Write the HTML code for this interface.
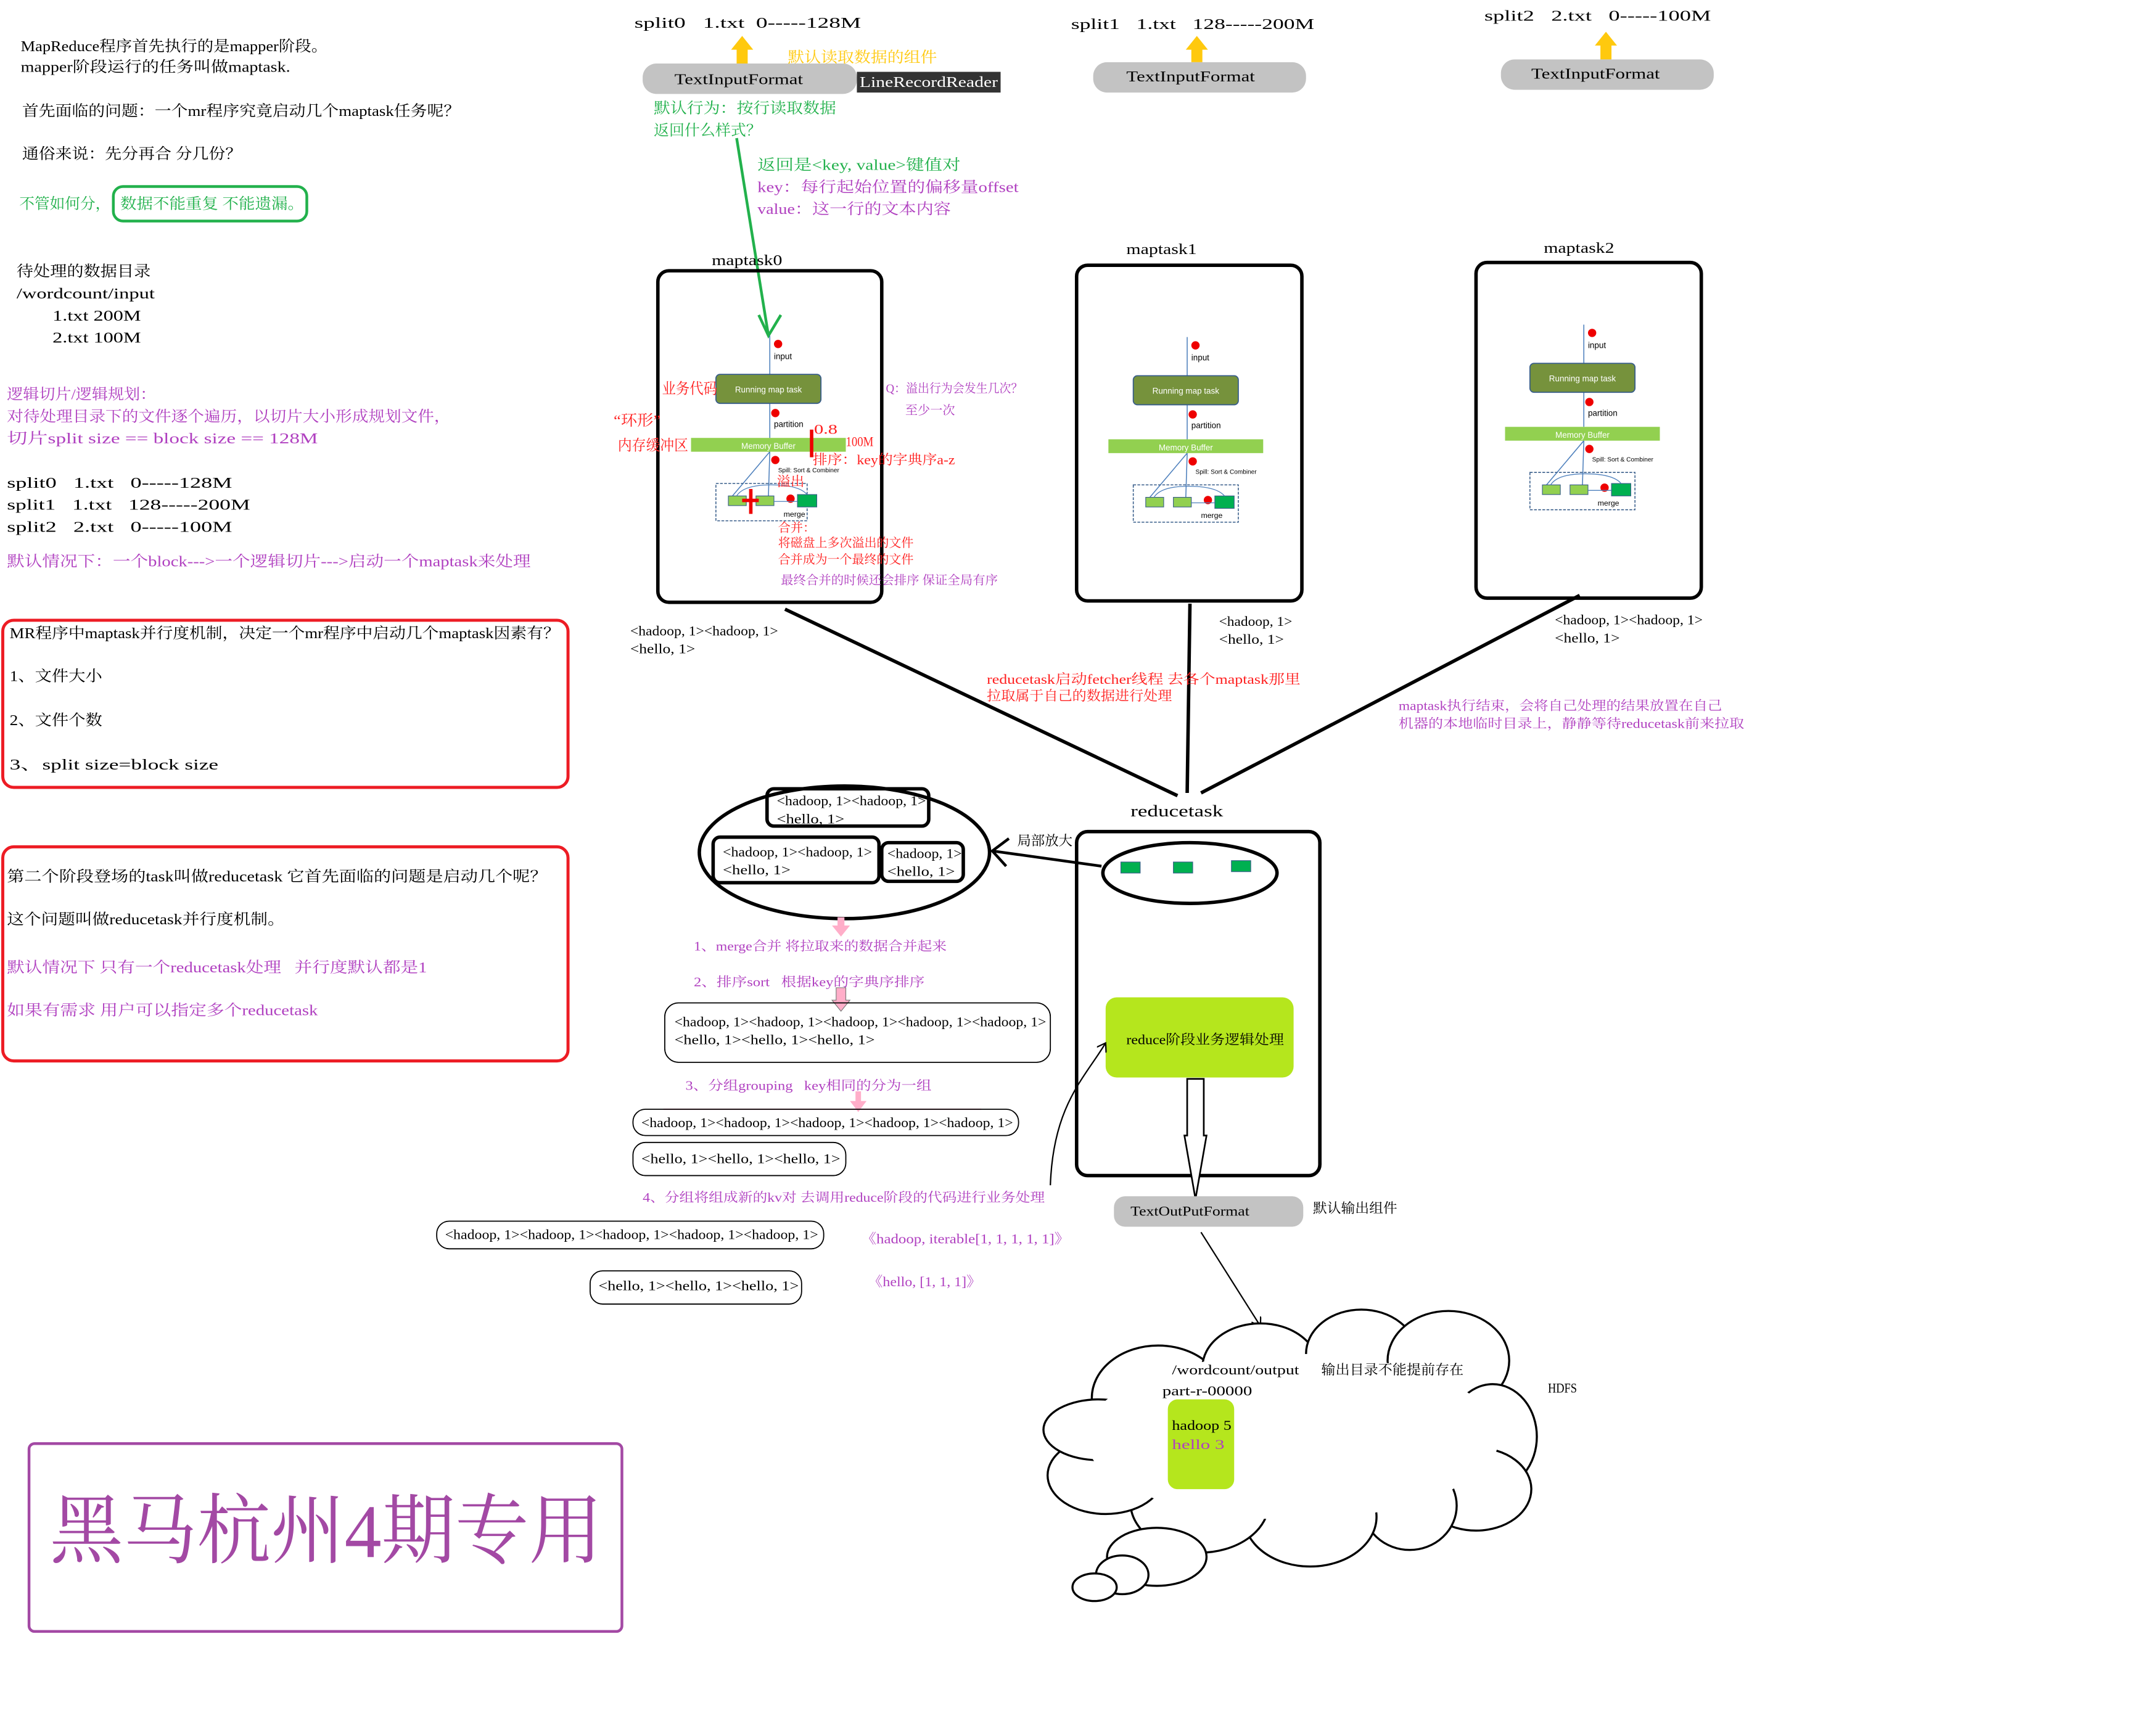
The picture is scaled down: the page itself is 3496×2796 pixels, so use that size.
<!DOCTYPE html>
<html><head><meta charset="utf-8"><style>
html,body{margin:0;padding:0;background:#fff;}
svg{display:block;}
text{font-family:"Liberation Serif","Noto Serif CJK SC",serif;font-size:11px;fill:#000;white-space:pre;}
.p{fill:#b040c0;} .g{fill:#22b14c;} .r{fill:#ff2020;} .y{fill:#ffc90e;}
.s{font-family:"Liberation Sans","Noto Sans CJK SC",sans-serif;}
</style></head><body>
<svg width="3496" height="2796" viewBox="0 0 1560 1248" preserveAspectRatio="none" xmlns="http://www.w3.org/2000/svg" xml:space="preserve">
<defs>
<marker id="ah" markerWidth="8" markerHeight="8" refX="6" refY="4" orient="auto"><path d="M0,0 L6,4 L0,8" fill="none" stroke="#000" stroke-width="1"/></marker>
</defs>
<rect width="1560" height="1248" fill="#fff"/>

<!-- left texts -->
<text x="15" y="37" textLength="222" lengthAdjust="spacingAndGlyphs">MapReduce程序首先执行的是mapper阶段。</text>
<text x="15" y="52" textLength="195" lengthAdjust="spacingAndGlyphs">mapper阶段运行的任务叫做maptask.</text>
<text x="16" y="84" textLength="317" lengthAdjust="spacingAndGlyphs">首先面临的问题：一个mr程序究竟启动几个maptask任务呢？</text>
<text x="16" y="115" textLength="159" lengthAdjust="spacingAndGlyphs">通俗来说：先分再合 分几份？</text>
<text x="14" y="151" class="g" textLength="66" lengthAdjust="spacingAndGlyphs">不管如何分，</text>
<rect x="82" y="135" width="140" height="25" rx="7" fill="none" stroke="#22b14c" stroke-width="2"/>
<text x="87" y="151" class="g" textLength="133" lengthAdjust="spacingAndGlyphs">数据不能重复 不能遗漏。</text>
<text x="12" y="200" textLength="97" lengthAdjust="spacingAndGlyphs">待处理的数据目录</text>
<text x="12" y="216" textLength="100" lengthAdjust="spacingAndGlyphs">/wordcount/input</text>
<text x="38" y="232" textLength="64" lengthAdjust="spacingAndGlyphs">1.txt 200M</text>
<text x="38" y="248" textLength="64" lengthAdjust="spacingAndGlyphs">2.txt 100M</text>
<text x="5" y="289" class="p" textLength="108" lengthAdjust="spacingAndGlyphs">逻辑切片/逻辑规划：</text>
<text x="5" y="305" class="p" textLength="321" lengthAdjust="spacingAndGlyphs">对待处理目录下的文件逐个遍历，以切片大小形成规划文件，</text>
<text x="5" y="321" class="p" textLength="225" lengthAdjust="spacingAndGlyphs">切片split size == block size == 128M</text>
<text x="5" y="353" textLength="163" lengthAdjust="spacingAndGlyphs">split0   1.txt   0-----128M</text>
<text x="5" y="369" textLength="176" lengthAdjust="spacingAndGlyphs">split1   1.txt   128-----200M</text>
<text x="5" y="385" textLength="163" lengthAdjust="spacingAndGlyphs">split2   2.txt   0-----100M</text>
<text x="5" y="410" class="p" textLength="379" lengthAdjust="spacingAndGlyphs">默认情况下：一个block---&gt;一个逻辑切片---&gt;启动一个maptask来处理</text>

<rect x="2" y="449" width="409" height="121" rx="8" fill="none" stroke="#ed1c24" stroke-width="2.2"/>
<text x="7" y="462" textLength="398" lengthAdjust="spacingAndGlyphs">MR程序中maptask并行度机制，决定一个mr程序中启动几个maptask因素有？</text>
<text x="7" y="493" textLength="67" lengthAdjust="spacingAndGlyphs">1、文件大小</text>
<text x="7" y="525" textLength="67" lengthAdjust="spacingAndGlyphs">2、文件个数</text>
<text x="7" y="557" textLength="151" lengthAdjust="spacingAndGlyphs">3、split size=block size</text>

<rect x="2" y="613" width="409" height="155" rx="8" fill="none" stroke="#ed1c24" stroke-width="2.2"/>
<text x="5" y="638" textLength="391" lengthAdjust="spacingAndGlyphs">第二个阶段登场的task叫做reducetask 它首先面临的问题是启动几个呢？</text>
<text x="5" y="669" textLength="201" lengthAdjust="spacingAndGlyphs">这个问题叫做reducetask并行度机制。</text>
<text x="5" y="704" class="p" textLength="304" lengthAdjust="spacingAndGlyphs">默认情况下 只有一个reducetask处理   并行度默认都是1</text>
<text x="5" y="735" class="p" textLength="225" lengthAdjust="spacingAndGlyphs">如果有需求 用户可以指定多个reducetask</text>

<rect x="21" y="1045" width="429" height="136" rx="4" fill="none" stroke="#a349a4" stroke-width="2"/>
<text x="36" y="1127" style="font-size:55px;fill:#a349a4" textLength="400" lengthAdjust="spacingAndGlyphs">黑马杭州4期专用</text>

<!-- top splits -->
<text x="459" y="20" textLength="164" lengthAdjust="spacingAndGlyphs">split0   1.txt  0-----128M</text>
<path d="M533,46 V36 H529 L537,26 L545,36 H541 V46Z" fill="#ffc90e"/>
<rect x="465" y="46" width="155" height="22" rx="10" fill="#c3c3c3"/>
<text x="488" y="61" textLength="93" lengthAdjust="spacingAndGlyphs">TextInputFormat</text>
<rect x="620" y="52" width="104" height="15" fill="#333"/>
<text x="622" y="63" style="fill:#fff" textLength="100" lengthAdjust="spacingAndGlyphs">LineRecordReader</text>
<text x="570" y="45" class="y" textLength="108" lengthAdjust="spacingAndGlyphs">默认读取数据的组件</text>
<text x="473" y="82" class="g" textLength="132" lengthAdjust="spacingAndGlyphs">默认行为：按行读取数据</text>
<text x="473" y="98" class="g" textLength="78" lengthAdjust="spacingAndGlyphs">返回什么样式？</text>
<path d="M533,100 L556,243 M549,228 L556,243 L565,228" fill="none" stroke="#22b14c" stroke-width="2"/>
<text x="548" y="123" class="g" textLength="147" lengthAdjust="spacingAndGlyphs">返回是&lt;key, value&gt;键值对</text>
<text x="548" y="139" class="p" textLength="189" lengthAdjust="spacingAndGlyphs">key：每行起始位置的偏移量offset</text>
<text x="548" y="155" class="p" textLength="140" lengthAdjust="spacingAndGlyphs">value：这一行的文本内容</text>

<text x="775" y="21" textLength="176" lengthAdjust="spacingAndGlyphs">split1   1.txt   128-----200M</text>
<path d="M862,45 V36 H858 L866,26 L874,36 H870 V45Z" fill="#ffc90e"/>
<rect x="791" y="45" width="154" height="22" rx="10" fill="#c3c3c3"/>
<text x="815" y="59" textLength="93" lengthAdjust="spacingAndGlyphs">TextInputFormat</text>

<text x="1074" y="15" textLength="164" lengthAdjust="spacingAndGlyphs">split2   2.txt   0-----100M</text>
<path d="M1158,43 V33 H1154 L1162,23 L1170,33 H1166 V43Z" fill="#ffc90e"/>
<rect x="1086" y="43" width="154" height="22" rx="10" fill="#c3c3c3"/>
<text x="1108" y="57" textLength="93" lengthAdjust="spacingAndGlyphs">TextInputFormat</text>

<!-- maptask boxes -->
<text x="515" y="192" textLength="51" lengthAdjust="spacingAndGlyphs">maptask0</text>
<rect x="476" y="196" width="162" height="240" rx="8" fill="none" stroke="#000" stroke-width="2.5"/>
<text x="815" y="184" textLength="51" lengthAdjust="spacingAndGlyphs">maptask1</text>
<rect x="779" y="192" width="163" height="243" rx="8" fill="none" stroke="#000" stroke-width="2.5"/>
<text x="1117" y="183" textLength="51" lengthAdjust="spacingAndGlyphs">maptask2</text>
<rect x="1068" y="190" width="163" height="243" rx="8" fill="none" stroke="#000" stroke-width="2.5"/>

<!-- internals maptask0 -->
<g transform="translate(518,271)">
<path d="M39,-28 V0 M39,21 V46 M39,56 L12,88 M39,56 L38,88" stroke="#4f81bd" stroke-width="0.7" fill="none"/>
<circle cx="45" cy="-22" r="3" fill="#e00"/><circle cx="43" cy="28" r="3" fill="#e00"/><circle cx="43" cy="62" r="3" fill="#e00"/><circle cx="54" cy="90" r="3" fill="#e00"/>
<text x="42" y="-11" class="s" style="font-size:6px">input</text>
<rect x="0" y="0" width="76" height="21" rx="3" fill="#76923c" stroke="#385d8a" stroke-width="0.8"/>
<text x="38" y="13" class="s" text-anchor="middle" style="font-size:6px;fill:#fff">Running map task</text>
<text x="42" y="38" class="s" style="font-size:6px">partition</text>
<rect x="-18" y="46" width="112" height="10" fill="#92d050"/>
<text x="38" y="54" class="s" text-anchor="middle" style="font-size:6px;fill:#fff">Memory Buffer</text>
<text x="45" y="71" class="s" style="font-size:4.5px">Spill: Sort &amp; Combiner</text>
<rect x="0" y="79" width="66" height="27" fill="none" stroke="#385d8a" stroke-width="0.7" stroke-dasharray="2,1"/>
<rect x="9" y="88" width="13" height="7" fill="#92d050" stroke="#385d8a" stroke-width="0.5"/>
<rect x="29" y="88" width="13" height="7" fill="#92d050" stroke="#385d8a" stroke-width="0.5"/>
<rect x="59" y="87" width="14" height="9" fill="#00b050" stroke="#385d8a" stroke-width="0.5"/>
<path d="M15,88 Q20,80 40,80 Q60,80 66,87 M42,92 H59" fill="none" stroke="#4f81bd" stroke-width="0.6"/>
<text x="49" y="103" class="s" style="font-size:5.5px">merge</text>
</g>
<rect x="586" y="311" width="2.5" height="20" fill="#e00"/>
<rect x="542" y="354" width="2.5" height="18" fill="#e00"/><rect x="537" y="361" width="12" height="2.5" fill="#e00"/>
<text x="479" y="285" class="r" textLength="40" lengthAdjust="spacingAndGlyphs">业务代码</text>
<text x="444" y="308" class="r" textLength="34" lengthAdjust="spacingAndGlyphs">“环形”</text>
<text x="447" y="326" class="r" textLength="51" lengthAdjust="spacingAndGlyphs">内存缓冲区</text>
<text x="589" y="314" class="r" style="font-size:10px" textLength="17" lengthAdjust="spacingAndGlyphs">0.8</text>
<text x="612" y="323" class="r" style="font-size:10px" textLength="20" lengthAdjust="spacingAndGlyphs">100M</text>
<text x="588" y="336" class="r" style="font-size:10px" textLength="103" lengthAdjust="spacingAndGlyphs">排序：key的字典序a-z</text>
<text x="562" y="352" class="r" style="font-size:10px">溢出</text>
<text x="563" y="385" class="r" style="font-size:9px">合并：</text>
<text x="563" y="396" class="r" style="font-size:9px" textLength="98" lengthAdjust="spacingAndGlyphs">将磁盘上多次溢出的文件</text>
<text x="563" y="408" class="r" style="font-size:9px" textLength="98" lengthAdjust="spacingAndGlyphs">合并成为一个最终的文件</text>
<text x="565" y="423" class="p" style="font-size:9px" textLength="157" lengthAdjust="spacingAndGlyphs">最终合并的时候还会排序 保证全局有序</text>
<text x="641" y="284" class="p" style="font-size:9px" textLength="99" lengthAdjust="spacingAndGlyphs">Q：溢出行为会发生几次？</text>
<text x="655" y="300" class="p" style="font-size:9px" textLength="36" lengthAdjust="spacingAndGlyphs">至少一次</text>

<!-- internals maptask1 -->
<g transform="translate(820,272)">
<path d="M39,-28 V0 M39,21 V46 M39,56 L12,88 M39,56 L38,88" stroke="#4f81bd" stroke-width="0.7" fill="none"/>
<circle cx="45" cy="-22" r="3" fill="#e00"/><circle cx="43" cy="28" r="3" fill="#e00"/><circle cx="43" cy="62" r="3" fill="#e00"/><circle cx="54" cy="90" r="3" fill="#e00"/>
<text x="42" y="-11" class="s" style="font-size:6px">input</text>
<rect x="0" y="0" width="76" height="21" rx="3" fill="#76923c" stroke="#385d8a" stroke-width="0.8"/>
<text x="38" y="13" class="s" text-anchor="middle" style="font-size:6px;fill:#fff">Running map task</text>
<text x="42" y="38" class="s" style="font-size:6px">partition</text>
<rect x="-18" y="46" width="112" height="10" fill="#92d050"/>
<text x="38" y="54" class="s" text-anchor="middle" style="font-size:6px;fill:#fff">Memory Buffer</text>
<text x="45" y="71" class="s" style="font-size:4.5px">Spill: Sort &amp; Combiner</text>
<rect x="0" y="79" width="76" height="27" fill="none" stroke="#385d8a" stroke-width="0.7" stroke-dasharray="2,1"/>
<rect x="9" y="88" width="13" height="7" fill="#92d050" stroke="#385d8a" stroke-width="0.5"/>
<rect x="29" y="88" width="13" height="7" fill="#92d050" stroke="#385d8a" stroke-width="0.5"/>
<rect x="59" y="87" width="14" height="9" fill="#00b050" stroke="#385d8a" stroke-width="0.5"/>
<path d="M15,88 Q20,80 40,80 Q60,80 66,87 M42,92 H59" fill="none" stroke="#4f81bd" stroke-width="0.6"/>
<text x="49" y="103" class="s" style="font-size:5.5px">merge</text>
</g>
<!-- internals maptask2 -->
<g transform="translate(1107,263)">
<path d="M39,-28 V0 M39,21 V46 M39,56 L12,88 M39,56 L38,88" stroke="#4f81bd" stroke-width="0.7" fill="none"/>
<circle cx="45" cy="-22" r="3" fill="#e00"/><circle cx="43" cy="28" r="3" fill="#e00"/><circle cx="43" cy="62" r="3" fill="#e00"/><circle cx="54" cy="90" r="3" fill="#e00"/>
<text x="42" y="-11" class="s" style="font-size:6px">input</text>
<rect x="0" y="0" width="76" height="21" rx="3" fill="#76923c" stroke="#385d8a" stroke-width="0.8"/>
<text x="38" y="13" class="s" text-anchor="middle" style="font-size:6px;fill:#fff">Running map task</text>
<text x="42" y="38" class="s" style="font-size:6px">partition</text>
<rect x="-18" y="46" width="112" height="10" fill="#92d050"/>
<text x="38" y="54" class="s" text-anchor="middle" style="font-size:6px;fill:#fff">Memory Buffer</text>
<text x="45" y="71" class="s" style="font-size:4.5px">Spill: Sort &amp; Combiner</text>
<rect x="0" y="79" width="76" height="27" fill="none" stroke="#385d8a" stroke-width="0.7" stroke-dasharray="2,1"/>
<rect x="9" y="88" width="13" height="7" fill="#92d050" stroke="#385d8a" stroke-width="0.5"/>
<rect x="29" y="88" width="13" height="7" fill="#92d050" stroke="#385d8a" stroke-width="0.5"/>
<rect x="59" y="87" width="14" height="9" fill="#00b050" stroke="#385d8a" stroke-width="0.5"/>
<path d="M15,88 Q20,80 40,80 Q60,80 66,87 M42,92 H59" fill="none" stroke="#4f81bd" stroke-width="0.6"/>
<text x="49" y="103" class="s" style="font-size:5.5px">merge</text>
</g>

<text x="456" y="460" style="font-size:10px" textLength="107" lengthAdjust="spacingAndGlyphs">&lt;hadoop, 1&gt;&lt;hadoop, 1&gt;</text>
<text x="456" y="473" style="font-size:10px" textLength="47" lengthAdjust="spacingAndGlyphs">&lt;hello, 1&gt;</text>
<text x="882" y="453" style="font-size:10px" textLength="53" lengthAdjust="spacingAndGlyphs">&lt;hadoop, 1&gt;</text>
<text x="882" y="466" style="font-size:10px" textLength="47" lengthAdjust="spacingAndGlyphs">&lt;hello, 1&gt;</text>
<text x="1125" y="452" style="font-size:10px" textLength="107" lengthAdjust="spacingAndGlyphs">&lt;hadoop, 1&gt;&lt;hadoop, 1&gt;</text>
<text x="1125" y="465" style="font-size:10px" textLength="47" lengthAdjust="spacingAndGlyphs">&lt;hello, 1&gt;</text>

<!-- lines to reducetask -->
<path d="M568,441 L852,576 M861,437 L859,574 M1143,431 L869,574" stroke="#000" stroke-width="2.5" fill="none"/>
<text x="714" y="495" class="r" style="font-size:10px" textLength="227" lengthAdjust="spacingAndGlyphs">reducetask启动fetcher线程 去各个maptask那里</text>
<text x="714" y="507" class="r" style="font-size:10px" textLength="134" lengthAdjust="spacingAndGlyphs">拉取属于自己的数据进行处理</text>
<text x="1012" y="514" class="p" style="font-size:9.5px" textLength="234" lengthAdjust="spacingAndGlyphs">maptask执行结束，会将自己处理的结果放置在自己</text>
<text x="1012" y="527" class="p" style="font-size:9.5px" textLength="250" lengthAdjust="spacingAndGlyphs">机器的本地临时目录上，静静等待reducetask前来拉取</text>

<!-- reducetask -->
<text x="818" y="591" style="font-size:12px" textLength="67" lengthAdjust="spacingAndGlyphs">reducetask</text>
<rect x="779" y="602" width="176" height="249" rx="8" fill="none" stroke="#000" stroke-width="2.5"/>
<ellipse cx="861" cy="632" rx="63" ry="22" fill="none" stroke="#000" stroke-width="2.5"/>
<rect x="811" y="624" width="14" height="8" fill="#00b050" stroke="#385d8a" stroke-width="0.5"/>
<rect x="849" y="624" width="14" height="8" fill="#00b050" stroke="#385d8a" stroke-width="0.5"/>
<rect x="891" y="623" width="14" height="8" fill="#00b050" stroke="#385d8a" stroke-width="0.5"/>
<rect x="800" y="722" width="136" height="58" rx="8" fill="#b5e61d"/>
<text x="815" y="756" style="font-size:10px" textLength="114" lengthAdjust="spacingAndGlyphs">reduce阶段业务逻辑处理</text>
<path d="M859,781 H871 V822 L873,822 L865,868 L857,822 L859,822 Z" fill="#fff" stroke="#000" stroke-width="1.2"/>
<rect x="806" y="866" width="137" height="22" rx="8" fill="#c3c3c3"/>
<text x="818" y="880" style="font-size:10px" textLength="86" lengthAdjust="spacingAndGlyphs">TextOutPutFormat</text>
<text x="950" y="878" style="font-size:10px" textLength="61" lengthAdjust="spacingAndGlyphs">默认输出组件</text>
<path d="M869,892 L912,960" stroke="#000" stroke-width="1" fill="none" marker-end="url(#ah)"/>
<path d="M760,858 C762,800 785,780 800,755" stroke="#000" stroke-width="1" fill="none" marker-end="url(#ah)"/>

<!-- big ellipse -->
<ellipse cx="611" cy="617" rx="105" ry="48" fill="none" stroke="#000" stroke-width="2.5"/>
<rect x="555" y="571" width="117" height="27" rx="5" fill="none" stroke="#000" stroke-width="2.5"/>
<text x="562" y="583" style="font-size:10px" textLength="108" lengthAdjust="spacingAndGlyphs">&lt;hadoop, 1&gt;&lt;hadoop, 1&gt;</text>
<text x="562" y="596" style="font-size:10px" textLength="49" lengthAdjust="spacingAndGlyphs">&lt;hello, 1&gt;</text>
<rect x="516" y="606" width="120" height="33" rx="5" fill="none" stroke="#000" stroke-width="2.5"/>
<text x="523" y="620" style="font-size:10px" textLength="108" lengthAdjust="spacingAndGlyphs">&lt;hadoop, 1&gt;&lt;hadoop, 1&gt;</text>
<text x="523" y="633" style="font-size:10px" textLength="49" lengthAdjust="spacingAndGlyphs">&lt;hello, 1&gt;</text>
<rect x="638" y="610" width="59" height="28" rx="5" fill="none" stroke="#000" stroke-width="2.5"/>
<text x="642" y="621" style="font-size:10px" textLength="54" lengthAdjust="spacingAndGlyphs">&lt;hadoop, 1&gt;</text>
<text x="642" y="634" style="font-size:10px" textLength="49" lengthAdjust="spacingAndGlyphs">&lt;hello, 1&gt;</text>
<path d="M797,627 L718,616 M730,607 L718,616 L728,627" stroke="#000" stroke-width="2" fill="none"/>
<text x="736" y="612" style="font-size:10px" textLength="40" lengthAdjust="spacingAndGlyphs">局部放大</text>

<!-- steps -->
<path d="M606,664 H611 V670 H615 L608.5,678 L602,670 H606Z" fill="#ffaec9"/>
<text x="502" y="688" class="p" style="font-size:9.5px" textLength="183" lengthAdjust="spacingAndGlyphs">1、merge合并 将拉取来的数据合并起来</text>
<text x="502" y="714" class="p" style="font-size:9.5px" textLength="167" lengthAdjust="spacingAndGlyphs">2、排序sort   根据key的字典序排序</text>
<path d="M605,715 H612 V724 H615 L608.5,732 L602,724 H605Z" fill="#ffaec9" stroke="#777" stroke-width="0.5"/>
<rect x="481" y="726" width="279" height="43" rx="10" fill="none" stroke="#000" stroke-width="0.8"/>
<text x="488" y="743" style="font-size:10px" textLength="269" lengthAdjust="spacingAndGlyphs">&lt;hadoop, 1&gt;&lt;hadoop, 1&gt;&lt;hadoop, 1&gt;&lt;hadoop, 1&gt;&lt;hadoop, 1&gt;</text>
<text x="488" y="756" style="font-size:10px" textLength="145" lengthAdjust="spacingAndGlyphs">&lt;hello, 1&gt;&lt;hello, 1&gt;&lt;hello, 1&gt;</text>
<text x="496" y="789" class="p" style="font-size:9.5px" textLength="178" lengthAdjust="spacingAndGlyphs">3、分组grouping   key相同的分为一组</text>
<path d="M619,790 H623 V797 H627 L621,805 L615,797 H619Z" fill="#ffaec9"/>
<line x1="480" y1="803" x2="710" y2="803" stroke="#ffaec9" stroke-width="1"/>
<rect x="458" y="803" width="279" height="19" rx="9" fill="none" stroke="#000" stroke-width="0.8"/>
<text x="464" y="816" style="font-size:10px" textLength="269" lengthAdjust="spacingAndGlyphs">&lt;hadoop, 1&gt;&lt;hadoop, 1&gt;&lt;hadoop, 1&gt;&lt;hadoop, 1&gt;&lt;hadoop, 1&gt;</text>
<rect x="458" y="827" width="154" height="24" rx="9" fill="none" stroke="#000" stroke-width="0.8"/>
<text x="464" y="842" style="font-size:10px" textLength="144" lengthAdjust="spacingAndGlyphs">&lt;hello, 1&gt;&lt;hello, 1&gt;&lt;hello, 1&gt;</text>
<text x="465" y="870" class="p" style="font-size:9.5px" textLength="291" lengthAdjust="spacingAndGlyphs">4、分组将组成新的kv对 去调用reduce阶段的代码进行业务处理</text>
<rect x="316" y="884" width="280" height="20" rx="9" fill="none" stroke="#000" stroke-width="0.8"/>
<text x="322" y="897" style="font-size:10px" textLength="270" lengthAdjust="spacingAndGlyphs">&lt;hadoop, 1&gt;&lt;hadoop, 1&gt;&lt;hadoop, 1&gt;&lt;hadoop, 1&gt;&lt;hadoop, 1&gt;</text>
<rect x="427" y="920" width="153" height="24" rx="9" fill="none" stroke="#000" stroke-width="0.8"/>
<text x="433" y="934" style="font-size:10px" textLength="145" lengthAdjust="spacingAndGlyphs">&lt;hello, 1&gt;&lt;hello, 1&gt;&lt;hello, 1&gt;</text>
<text x="623" y="900" class="p" style="font-size:10px" textLength="151" lengthAdjust="spacingAndGlyphs">《hadoop, iterable[1, 1, 1, 1, 1]》</text>
<text x="628" y="931" class="p" style="font-size:10px" textLength="82" lengthAdjust="spacingAndGlyphs">《hello, [1, 1, 1]》</text>

<!-- cloud -->
<g stroke="#000" stroke-width="1.5" fill="#fff">
<ellipse cx="838" cy="1012" rx="48" ry="38"/>
<ellipse cx="912" cy="990" rx="42" ry="32"/>
<ellipse cx="985" cy="980" rx="40" ry="32"/>
<ellipse cx="1048" cy="985" rx="44" ry="36"/>
<ellipse cx="1080" cy="1040" rx="32" ry="38"/>
<ellipse cx="1068" cy="1078" rx="40" ry="30"/>
<ellipse cx="1020" cy="1090" rx="34" ry="32"/>
<ellipse cx="948" cy="1098" rx="48" ry="36"/>
<ellipse cx="868" cy="1088" rx="50" ry="36"/>
<ellipse cx="800" cy="1068" rx="42" ry="28"/>
<ellipse cx="795" cy="1035" rx="40" ry="22"/>
</g>
<ellipse cx="935" cy="1040" rx="150" ry="60" fill="#fff"/>
<ellipse cx="837" cy="1127" rx="36" ry="21" fill="#fff" stroke="#000" stroke-width="1.5"/>
<ellipse cx="812" cy="1140" rx="19" ry="14" fill="#fff" stroke="#000" stroke-width="1.5"/>
<ellipse cx="792" cy="1149" rx="16" ry="10" fill="#fff" stroke="#000" stroke-width="1.5"/>
<text x="848" y="995" style="font-size:10px" textLength="92" lengthAdjust="spacingAndGlyphs">/wordcount/output</text>
<text x="956" y="995" style="font-size:10px" textLength="103" lengthAdjust="spacingAndGlyphs">输出目录不能提前存在</text>
<text x="841" y="1010" style="font-size:10px" textLength="65" lengthAdjust="spacingAndGlyphs">part-r-00000</text>
<rect x="845" y="1013" width="48" height="65" rx="7" fill="#b5e61d"/>
<text x="848" y="1035" style="font-size:10px" textLength="43" lengthAdjust="spacingAndGlyphs">hadoop 5</text>
<text x="848" y="1049" class="p" style="font-size:10px" textLength="38" lengthAdjust="spacingAndGlyphs">hello 3</text>
<text x="1120" y="1008" style="font-size:10px" textLength="21" lengthAdjust="spacingAndGlyphs">HDFS</text>
</svg>
</body></html>
